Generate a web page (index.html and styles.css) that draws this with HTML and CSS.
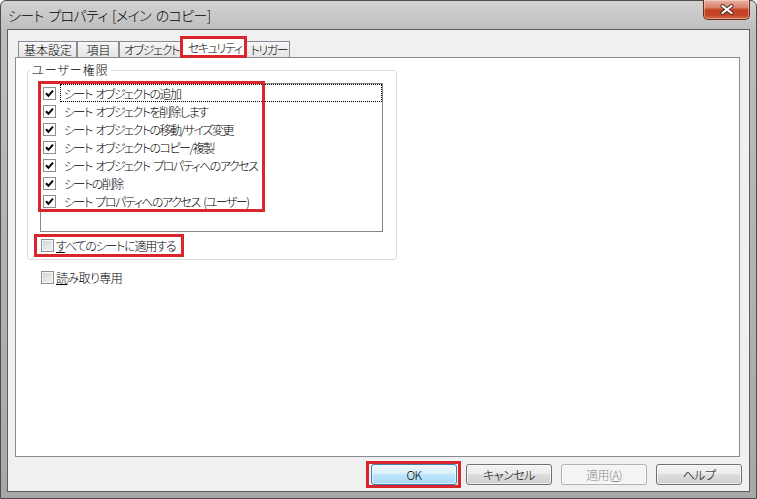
FILE: index.html
```html
<!DOCTYPE html>
<html lang="ja">
    <head>
        <meta charset="UTF-8" />
        <meta name="viewport" content="width=device-width, initial-scale=1.0" />
        <title>シート プロパティ</title>

        <link rel="stylesheet" href="styles.css">
    </head>

    <body>
        <div class="window">
            <div class="titlebar">
                <span class="title">シート プロパティ [メイン のコピー]</span>
                <button class="close" type="button" aria-label="閉じる">
                    <svg width="14" height="11" viewBox="0 0 14 11">
                        <path d="M2.5 2 L11.5 9 M11.5 2 L2.5 9" stroke="#4a2b24" stroke-width="4" stroke-linecap="round" />
                        <path d="M2.5 2 L11.5 9 M11.5 2 L2.5 9" stroke="#fff" stroke-width="2.2" stroke-linecap="round" />
                    </svg>
                </button>
            </div>

            <div class="client">
                <div class="tabs">
                    <span class="tab">基本設定</span>
                    <span class="tab">項目</span>
                    <span class="tab tab_kana">オブジェクト</span>
                    <span class="tab tab_kana active">セキュリティ</span>
                    <span class="tab tab_kana">トリガー</span>
                </div>

                <div class="panel">
                    <fieldset class="group">
                        <legend>ユーザー権限</legend>
                        <div class="listbox">
                            <div class="row"><span class="cb on"><svg viewBox="0 0 11 11"><path d="M2 5.2 L4.4 7.8 L9 2.6" /></svg></span><span class="label focus">シート オブジェクトの追加</span></div>
                            <div class="row"><span class="cb on"><svg viewBox="0 0 11 11"><path d="M2 5.2 L4.4 7.8 L9 2.6" /></svg></span><span class="label">シート オブジェクトを削除します</span></div>
                            <div class="row"><span class="cb on"><svg viewBox="0 0 11 11"><path d="M2 5.2 L4.4 7.8 L9 2.6" /></svg></span><span class="label">シート オブジェクトの移動/サイズ変更</span></div>
                            <div class="row"><span class="cb on"><svg viewBox="0 0 11 11"><path d="M2 5.2 L4.4 7.8 L9 2.6" /></svg></span><span class="label">シート オブジェクトのコピー/複製</span></div>
                            <div class="row"><span class="cb on"><svg viewBox="0 0 11 11"><path d="M2 5.2 L4.4 7.8 L9 2.6" /></svg></span><span class="label">シート オブジェクト プロパティへのアクセス</span></div>
                            <div class="row"><span class="cb on"><svg viewBox="0 0 11 11"><path d="M2 5.2 L4.4 7.8 L9 2.6" /></svg></span><span class="label">シートの削除</span></div>
                            <div class="row"><span class="cb on"><svg viewBox="0 0 11 11"><path d="M2 5.2 L4.4 7.8 L9 2.6" /></svg></span><span class="label">シート プロパティへのアクセス (ユーザー)</span></div>
                            <div class="mark mark_list"></div>
                        </div>
                        <label class="check apply"><span class="cb"></span><span><u>す</u>べてのシートに適用する</span></label>
                    </fieldset>

                    <label class="check readonly"><span class="cb"></span><span><u>読</u>み取り専用</span></label>
                </div>

                <div class="buttons">
                    <button class="btn default" type="button">OK</button>
                    <button class="btn" type="button">キャンセル</button>
                    <button class="btn" type="button" disabled>適用(<u>A</u>)</button>
                    <button class="btn" type="button">ヘルプ</button>
                </div>
            </div>
        </div>
    </body>
</html>
```

FILE: styles.css
```css
body {
    margin: 0;
    background-color: #fff;
}

.window {
    width: 757px;
    height: 499px;
    box-sizing: border-box;
    display: flex;
    flex-direction: column;
    border: 1px solid #4c4c4c;
    border-radius: 6px 6px 0 0;
    background-image: linear-gradient(180deg, #d3d3d3, #bdbdbd 30px, #a8a8a8);
    font-family: "Noto Sans CJK JP", sans-serif;
    font-feature-settings: "palt";
    font-size: 12px;
    font-weight: 300;
    color: #000;
}

.titlebar {
    height: 28px;
    display: flex;
    justify-content: space-between;
    align-items: flex-start;
    padding: 0 6px 0 7px;
}
.title {
    font-size: 14px;
    line-height: 28px;
    word-spacing: 2px;
    letter-spacing: -0.6px;
}

.close {
    width: 47px;
    height: 20px;
    margin-top: -1px;
    padding: 0;
    display: flex;
    justify-content: center;
    align-items: center;
    border: 1px solid #6e2a1c;
    border-top: none;
    border-radius: 0 0 5px 5px;
    background-image: linear-gradient(180deg, #eab2a4 0%, #d98069 40%, #c3411f 52%, #c4462a 80%, #d96a4c 100%);
    box-shadow: inset 0 0 0 1px rgb(255 255 255 / 0.35);
}

.client {
    flex: 1;
    display: flex;
    flex-direction: column;
    margin: 0 6px 6px 6px;
    border: 1px solid #5e5e5e;
    background-color: #f0f0f0;
}

.tabs {
    height: 16px;
    margin-top: 11px;
    padding-left: 10px;
    display: flex;
    align-items: flex-end;
}
.tab {
    position: relative;
    height: 16px;
    min-width: 42px;
    box-sizing: border-box;
    padding: 0 4px 0 5px;
    text-align: center;
    line-height: 15px;
    border: 1px solid #898c95;
    border-bottom: none;
    background-image: linear-gradient(180deg, #f7f7f7, #e4e4e4);
}
.tab_kana {
    min-width: 0;
    letter-spacing: -1.4px;
    padding: 0 2px 0 4px;
}
.tab.active {
    height: 20px;
    margin: 0 -2px -1px -2px;
    padding: 0 5px 0 7px;
    line-height: 17px;
    z-index: 1;
    background: #fff;
}
.tab.active::after {
    content: "";
    position: absolute;
    top: -3px;
    left: -1px;
    right: -1px;
    bottom: 0;
    border: 3px solid #d9252b;
}

.panel {
    flex: 1;
    margin: 0 9px 0 7px;
    border: 1px solid #898c95;
    background-color: #fff;
}

.group {
    width: 370px;
    box-sizing: border-box;
    margin: 5px 0 0 11px;
    padding: 0 0 5px 0;
    border: 1px solid #d9dcdf;
    border-radius: 3px;
}
.group legend {
    margin-left: 2px;
    padding: 0 2px;
    line-height: 14px;
    letter-spacing: 1px;
}

.listbox {
    position: relative;
    height: 149px;
    box-sizing: border-box;
    margin: 6px 13px 0 12px;
    border: 1px solid #828790;
    background-color: #fff;
}

.row {
    height: 18px;
    display: flex;
    align-items: center;
    padding-left: 2px;
}
.label {
    flex: 1;
    height: 18px;
    box-sizing: border-box;
    margin-left: 4px;
    padding: 0 3px;
    line-height: 17px;
    letter-spacing: -1.5px;
    word-spacing: 2.5px;
    border: 1px solid transparent;
    white-space: nowrap;
}
.label.focus {
    border: 1px dotted #000;
}

.cb {
    width: 13px;
    height: 13px;
    box-sizing: border-box;
    flex: none;
    display: flex;
    justify-content: center;
    align-items: center;
    border: 1px solid #8e8f8f;
    background-image: linear-gradient(135deg, #cfd1d4, #f5f5f5);
    box-shadow: inset 0 0 0 1px #f4f4f4;
}
.cb.on {
    background: #fff;
    box-shadow: none;
}
.cb svg {
    width: 11px;
    height: 11px;
}
.cb path {
    fill: none;
    stroke: #000;
    stroke-width: 2;
}

.mark {
    position: absolute;
    border: 3px solid #d9252b;
    pointer-events: none;
}
.mark_list {
    top: -3px;
    left: -3px;
    width: 227px;
    height: 131px;
    box-sizing: border-box;
}

.check {
    position: relative;
    width: 144px;
    height: 17px;
    box-sizing: border-box;
    display: flex;
    align-items: center;
    gap: 2px;
    padding-left: 4px;
    letter-spacing: -1.2px;
    white-space: nowrap;
}
.check u {
    text-underline-offset: 1px;
}
.apply {
    margin: 5px 0 0 9px;
}
.apply::after {
    content: "";
    position: absolute;
    inset: -3px;
    border: 3px solid #d9252b;
}
.readonly {
    margin: 9px 0 0 21px;
    letter-spacing: -0.6px;
}

.buttons {
    display: flex;
    justify-content: flex-end;
    gap: 9px;
    margin: 7px 0 6px;
    padding-right: 7px;
}
.btn {
    position: relative;
    width: 86px;
    height: 21px;
    padding: 0;
    font-family: inherit;
    font-feature-settings: "palt";
    font-size: 12px;
    font-weight: 300;
    letter-spacing: -0.5px;
    color: #000;
    border: 1px solid #707070;
    border-radius: 3px;
    background-image: linear-gradient(180deg, #f3f3f3 0%, #ebebeb 49%, #dddddd 50%, #cfcfcf 100%);
    box-shadow: inset 0 0 0 1px rgb(255 255 255 / 0.6);
}
.btn.default {
    border-color: #3c7fb1;
    background-image: linear-gradient(180deg, #eaf6fd 0%, #d9f0fc 49%, #bee6fd 50%, #a7d9f5 100%);
}
.btn.default::after {
    content: "";
    position: absolute;
    top: -4px;
    left: -6px;
    right: -5px;
    bottom: -4px;
    border: 3px solid #d9252b;
}
.btn:disabled {
    color: #8d8d8d;
    border-color: #adb2b5;
    background: #f4f4f4;
}
```
